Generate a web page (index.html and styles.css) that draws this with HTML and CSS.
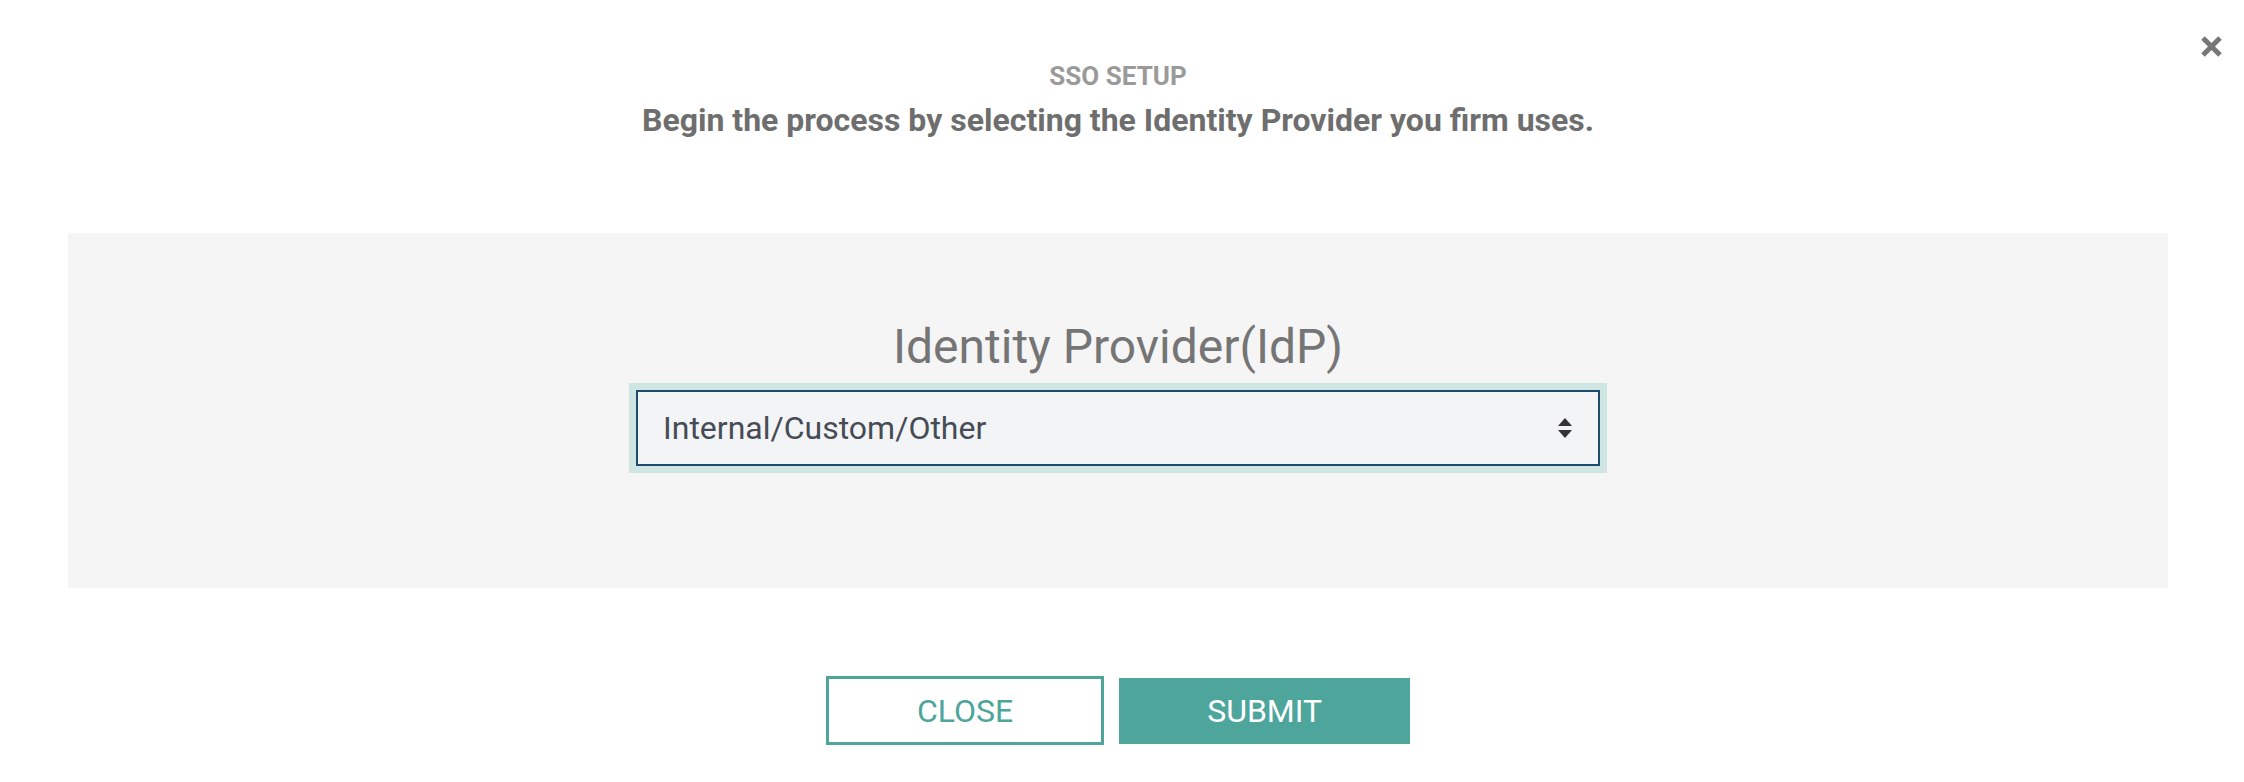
FILE: index.html
```html
<!DOCTYPE html>
<html lang="en">
<head>
  <meta charset="UTF-8" />
  <meta name="viewport" content="width=device-width, initial-scale=1.0"/>
  <title>SSO Setup</title>
  <link rel="stylesheet" href="styles.css">
</head>
<body>
  <div class="modal">
    <!-- close icon -->
    <button class="close-x" aria-label="Close">
      <svg width="23" height="23" viewBox="0 0 23 23">
        <path d="M3 3 L20 20 M20 3 L3 20" stroke="#777" stroke-width="5" fill="none"/>
      </svg>
    </button>

    <header class="modal-head">
      <p class="eyebrow">SSO SETUP</p>
      <h1>Begin the process by selecting the Identity Provider you firm uses.</h1>
    </header>

    <!-- IdP picker -->
    <section class="idp-panel">
      <label for="idp">Identity Provider(IdP)</label>
      <div class="select-wrap">
        <select id="idp">
          <option>Internal/Custom/Other</option>
          <option>Okta</option>
          <option>Azure AD</option>
          <option>OneLogin</option>
        </select>
        <svg class="arrows" width="14" height="20" viewBox="0 0 14 20">
          <path d="M7 0 L14 8 L0 8 Z M0 12 L14 12 L7 20 Z" fill="#333"/>
        </svg>
      </div>
    </section>

    <div class="actions">
      <button class="btn btn-outline">CLOSE</button>
      <button class="btn btn-solid">SUBMIT</button>
    </div>
  </div>
</body>
</html>
```

FILE: styles.css
```css
body {
  font-family: Roboto, "Liberation Sans", Arial, sans-serif;
  background: #fff;
  margin: 0;
  padding: 0;
}
.modal {
  position: relative;
  padding: 63px 76px 40px 68px;
}
.close-x {
  position: absolute;
  top: 35px;
  right: 21px;
  width: 23px;
  height: 23px;
  padding: 0;
  border: none;
  background: none;
  cursor: pointer;
}
.close-x svg {
  display: block;
}
.modal-head {
  text-align: center;
}
.eyebrow {
  margin: 0;
  font-size: 26px;
  line-height: 26px;
  font-weight: 700;
  color: #9a9a9a;
}
.modal-head h1 {
  margin: 15px 0 0;
  font-size: 32px;
  line-height: 32px;
  font-weight: 700;
  color: #6e6e6e;
}
.idp-panel {
  margin-top: 97px;
  background: #f5f5f5;
  padding: 90px 0 122px;
  display: flex;
  flex-direction: column;
  align-items: center;
}
.idp-panel label {
  font-size: 48px;
  line-height: 48px;
  color: #757575;
  margin-bottom: 19px;
}
.select-wrap {
  position: relative;
  width: 964px;
}
.select-wrap select {
  appearance: none;
  -webkit-appearance: none;
  width: 100%;
  height: 76px;
  box-sizing: border-box;
  border: 2px solid #1d4a6d;
  border-radius: 0;
  background: #f3f4f6;
  box-shadow: 0 0 0 7px #cfe5e1;
  padding: 0 60px 0 25px;
  font-family: inherit;
  font-size: 32px;
  color: #454c55;
  outline: none;
}
.arrows {
  position: absolute;
  right: 28px;
  top: 28px;
  pointer-events: none;
}
.actions {
  margin-top: 88px;
  display: flex;
  justify-content: center;
  align-items: center;
  gap: 15px;
}
.btn {
  font-family: inherit;
  font-size: 32px;
  padding: 0 88px;
  box-sizing: border-box;
  border-radius: 0;
  cursor: pointer;
}
.btn-outline {
  height: 69px;
  background: #fff;
  color: #4da59b;
  border: 3px solid #4da59b;
}
.btn-solid {
  height: 66px;
  background: #4da59b;
  color: #fff;
  border: none;
}
.btn-solid:hover {
  background: #45998f;
}
```
